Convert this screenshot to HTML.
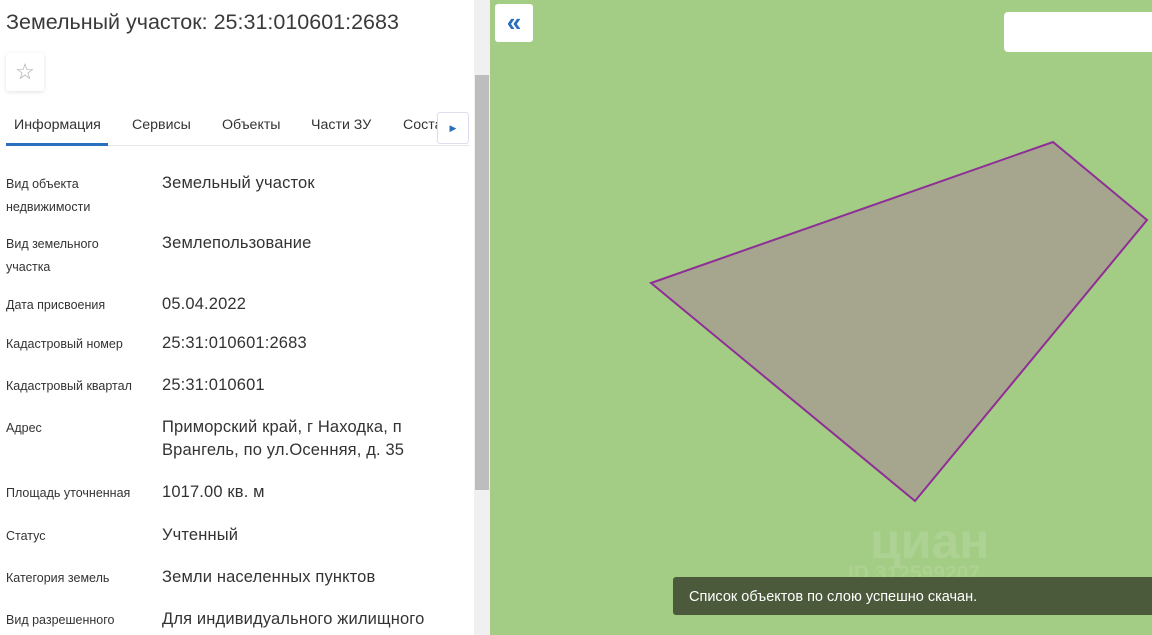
<!DOCTYPE html><html><head><meta charset="utf-8"><style>
body{margin:0;width:1152px;height:635px;overflow:hidden;position:relative;font-family:"Liberation Sans",sans-serif;background:#fff}
.l{position:absolute;left:6px;font-size:12.5px;color:#333;line-height:23px}
.v{position:absolute;left:162px;font-size:16.5px;color:#333;line-height:23px;letter-spacing:.15px}
</style></head><body>
<div style="position:absolute;left:6px;top:10px;font-size:21.5px;color:#3a3a3a">Земельный участок: 25:31:010601:2683</div>
<div style="position:absolute;left:6px;top:53px;width:38px;height:38px;border-radius:3px;box-shadow:0 1px 4px rgba(0,0,0,.12);color:#aaa;font-size:22px;text-align:center;line-height:38px">☆</div>
<div style="position:absolute;top:117px;left:14px;font-size:14.2px;color:#333">Информация</div>
<div style="position:absolute;top:117px;left:132px;font-size:14.2px;color:#333">Сервисы</div>
<div style="position:absolute;top:117px;left:222px;font-size:14.2px;color:#333">Объекты</div>
<div style="position:absolute;top:117px;left:311px;font-size:14.2px;color:#333">Части ЗУ</div>
<div style="position:absolute;top:117px;left:403px;font-size:14.2px;color:#333">Соста</div>
<div style="position:absolute;top:145px;left:6px;width:464px;height:1px;background:#e6e6e6"></div>
<div style="position:absolute;top:143px;left:6px;width:102px;height:3px;background:#2a6fbe"></div>
<div style="position:absolute;top:112px;left:437px;width:30px;height:30px;background:#fff;border:1px solid #dde;border-radius:3px;color:#2a6fbe;font-size:9px;text-align:center;line-height:30px">▶</div>
<div style="position:absolute;left:474px;top:0;width:16px;height:635px;background:#f0f0f0"></div>
<div style="position:absolute;left:475px;top:75px;width:14px;height:415px;background:#bdbdbd"></div>
<div class="l" style="top:173px">Вид объекта<br>недвижимости</div><div class="v" style="top:172px">Земельный участок</div>
<div class="l" style="top:233px">Вид земельного<br>участка</div><div class="v" style="top:232px">Землепользование</div>
<div class="l" style="top:294px">Дата присвоения</div><div class="v" style="top:293px">05.04.2022</div>
<div class="l" style="top:333px">Кадастровый номер</div><div class="v" style="top:332px">25:31:010601:2683</div>
<div class="l" style="top:375px">Кадастровый квартал</div><div class="v" style="top:374px">25:31:010601</div>
<div class="l" style="top:417px">Адрес</div><div class="v" style="top:416px">Приморский край, г Находка, п<br>Врангель, по ул.Осенняя, д. 35</div>
<div class="l" style="top:482px">Площадь уточненная</div><div class="v" style="top:481px">1017.00 кв. м</div>
<div class="l" style="top:525px">Статус</div><div class="v" style="top:524px">Учтенный</div>
<div class="l" style="top:567px">Категория земель</div><div class="v" style="top:566px">Земли населенных пунктов</div>
<div class="l" style="top:609px">Вид разрешенного</div><div class="v" style="top:608px">Для индивидуального жилищного</div>
<div style="position:absolute;left:490px;top:0;width:662px;height:635px;background:#a3cc84"></div>
<svg style="position:absolute;left:0;top:0" width="1152" height="635"><polygon points="651,283 1053,142 1147,220 915,501" fill="#a6a68e" stroke="#8e2e96" stroke-width="2"/></svg>
<div style="position:absolute;left:495px;top:4px;width:38px;height:38px;background:#fff;border-radius:3px;color:#2a6fbe;font-size:26px;text-align:center;line-height:36px;font-weight:bold">«</div>
<div style="position:absolute;left:1004px;top:12px;width:160px;height:40px;background:#fff;border-radius:4px"></div>
<div style="position:absolute;left:870px;top:512px;font-size:50px;color:rgba(255,255,255,.13);font-weight:bold">циан</div>
<div style="position:absolute;left:848px;top:562px;font-size:21px;color:rgba(255,255,255,.1);font-weight:bold">ID 312599207</div>
<div style="position:absolute;left:673px;top:577px;width:490px;height:38px;background:#4a5a3a;border-radius:3px;color:#fff;font-size:14.5px;line-height:40px;padding-left:16px;box-sizing:border-box">Список объектов по слою успешно скачан.</div>
</body></html>
